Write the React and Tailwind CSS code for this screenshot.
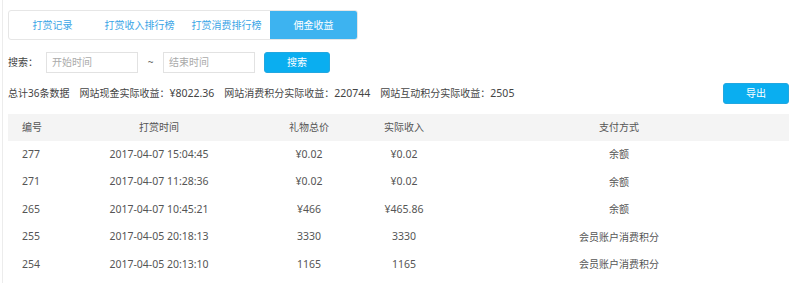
export default function App() {
  const rows = [
    ["277", "2017-04-07 15:04:45", "¥0.02", "¥0.02", "余额"],
    ["271", "2017-04-07 11:28:36", "¥0.02", "¥0.02", "余额"],
    ["265", "2017-04-07 10:45:21", "¥466", "¥465.86", "余额"],
    ["255", "2017-04-05 20:18:13", "3330", "3330", "会员账户消费积分"],
    ["254", "2017-04-05 20:13:10", "1165", "1165", "会员账户消费积分"],
  ];
  const font = { fontFamily: '"Noto Sans", "Noto Sans CJK SC", sans-serif' };
  return (
    <div className="w-[793px] h-[283px] bg-white overflow-hidden flex text-[10px] text-[#555]" style={font}>
      <div className="w-[2px] shrink-0" />
      <div className="w-px shrink-0 bg-[#ececec]" />
      <div className="flex-1 pl-[5px] pr-[4px] pt-[10px]">
        <div className="flex w-[350px] h-[30px] border border-[#e6e6e6] rounded-[3px] overflow-hidden">
          <div className="flex-1 flex items-center justify-center text-[#3ba5e6]">打赏记录</div>
          <div className="flex-1 flex items-center justify-center text-[#3ba5e6]">打赏收入排行榜</div>
          <div className="flex-1 flex items-center justify-center text-[#3ba5e6]">打赏消费排行榜</div>
          <div className="flex-1 flex items-center justify-center bg-[#3db3f0] text-white">佣金收益</div>
        </div>
        <div className="flex items-center h-[21px] mt-[12px]">
          <span className="w-[38px] text-[#444]">搜索：</span>
          <div className="w-[92px] h-[21px] border border-[#e2e2e2] flex items-center pl-[5px] text-[#aaa]">开始时间</div>
          <span className="w-[25px] text-center text-[#666]">~</span>
          <div className="w-[92px] h-[21px] border border-[#e2e2e2] flex items-center pl-[5px] text-[#aaa]">结束时间</div>
          <button className="ml-[9px] w-[66px] h-[21px] rounded-[3px] bg-[#0aaef0] border border-[#22a7e0] text-white flex items-center justify-center">搜索</button>
        </div>
        <div className="flex items-center justify-between h-[21px] mt-[10px]">
          <div className="flex gap-[10px] text-[#444]">
            <span>总计36条数据</span>
            <span>网站现金实际收益：<span className="text-[10.5px]">¥8022.36</span></span>
            <span>网站消费积分实际收益：<span className="text-[10.5px]">220744</span></span>
            <span>网站互动积分实际收益：<span className="text-[10.5px]">2505</span></span>
          </div>
          <button className="w-[66px] h-[21px] rounded-[3px] bg-[#0aaef0] border border-[#22a7e0] text-white flex items-center justify-center">导出</button>
        </div>
        <div className="mt-[10px] text-[#555]">
          <div className="flex h-[27px] items-center bg-[#f4f4f4]">
            <div className="w-[51px] pl-[14px]">编号</div>
            <div className="w-[200px] text-center">打赏时间</div>
            <div className="w-[100px] text-center">礼物总价</div>
            <div className="w-[90px] text-center">实际收入</div>
            <div className="w-[340px] text-center">支付方式</div>
          </div>
          {rows.map((r) => (
            <div key={r[0]} className="flex h-[27.5px] items-center">
              <div className="w-[51px] pl-[14px] text-[10.5px]">{r[0]}</div>
              <div className="w-[200px] text-center text-[10.5px]">{r[1]}</div>
              <div className="w-[100px] text-center text-[10.5px]">{r[2]}</div>
              <div className="w-[90px] text-center text-[10.5px]">{r[3]}</div>
              <div className="w-[340px] text-center">{r[4]}</div>
            </div>
          ))}
        </div>
      </div>
    </div>
  );
}
